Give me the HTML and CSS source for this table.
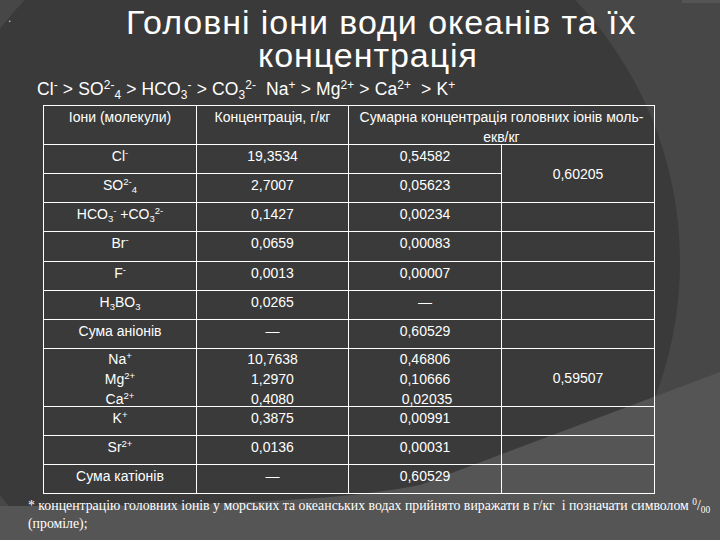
FILE: index.html
```html
<!DOCTYPE html>
<html lang="uk">
<head>
<meta charset="utf-8">
<title>Головні іони води океанів</title>
<link rel="stylesheet" href="styles.css">
</head>
<body>
<div class="slide">
  <svg class="bg" width="720" height="540" viewBox="0 0 720 540" aria-hidden="true">
    <rect x="0" y="0" width="720" height="540" fill="#474747"/>
    <circle cx="300" cy="262" r="380" fill="#3a3a3a"/>
    <path d="M0,506 C180,506 330,503 420,485 L720,372 L720,540 L0,540 Z" fill="#555555"/>
    <rect x="682" y="0" width="38" height="3" fill="#555555"/>
  </svg>
  <span class="dot">.</span>
  <header class="title">
    <div class="t1">Головні іони води океанів та їх</div>
    <div class="t2">концентрація</div>
  </header>
  <p class="ions">Cl<sup>-</sup> &gt; SO<sup>2-</sup><sub>4</sub> &gt; HCO<sub>3</sub><sup>-</sup> &gt; CO<sub>3</sub><sup>2-</sup>&nbsp; Na<sup>+</sup> &gt; Mg<sup>2+</sup> &gt; Ca<sup>2+</sup>&nbsp; &gt; K<sup>+</sup></p>
  <div class="grid">
    <div class="c">Іони (молекули)</div>
    <div class="c">Концентрація, г/кг</div>
    <div class="c span2">Сумарна концентрація головних іонів моль-<br>екв/кг</div>

    <div class="c">Cl<sup>-</sup></div>
    <div class="c">19,3534</div>
    <div class="c">0,54582</div>
    <div class="c rows2 mid">0,60205</div>

    <div class="c">SO<sup>2-</sup><sub>4</sub></div>
    <div class="c">2,7007</div>
    <div class="c">0,05623</div>

    <div class="c">HCO<sub>3</sub><sup>-</sup> +CO<sub>3</sub><sup>2-</sup></div>
    <div class="c">0,1427</div>
    <div class="c">0,00234</div>
    <div class="c"></div>

    <div class="c">Br<sup>-</sup></div>
    <div class="c">0,0659</div>
    <div class="c">0,00083</div>
    <div class="c"></div>

    <div class="c">F<sup>-</sup></div>
    <div class="c">0,0013</div>
    <div class="c">0,00007</div>
    <div class="c"></div>

    <div class="c">H<sub>3</sub>BO<sub>3</sub></div>
    <div class="c">0,0265</div>
    <div class="c">—</div>
    <div class="c"></div>

    <div class="c">Сума аніонів</div>
    <div class="c">—</div>
    <div class="c">0,60529</div>
    <div class="c"></div>

    <div class="c block">Na<sup>+</sup><br>Mg<sup>2+</sup><br>Ca<sup>2+</sup></div>
    <div class="c block">10,7638<br>1,2970<br>0,4080</div>
    <div class="c block">0,46806<br>0,10666<br>&nbsp;0,02035</div>
    <div class="c mid">0,59507</div>

    <div class="c">K<sup>+</sup></div>
    <div class="c">0,3875</div>
    <div class="c">0,00991</div>
    <div class="c"></div>

    <div class="c">Sr<sup>2+</sup></div>
    <div class="c">0,0136</div>
    <div class="c">0,00031</div>
    <div class="c"></div>

    <div class="c">Сума катіонів</div>
    <div class="c">—</div>
    <div class="c">0,60529</div>
    <div class="c"></div>
  </div>
  <p class="note">* концентрацію головних іонів у морських та океанських водах прийнято виражати в г/кг &nbsp;і позначати символом <sup>0</sup>/<sub>00</sub><br>(проміле);</p>
</div>
</body>
</html>
```

FILE: styles.css
```css
html, body {
  margin: 0;
  padding: 0;
}

body {
  background: #3a3a3a;
  color: #ffffff;
  font-family: "Liberation Sans", Arial, sans-serif;
}

.slide {
  position: relative;
  width: 720px;
  height: 540px;
  overflow: hidden;
}

.bg {
  position: absolute;
  left: 0;
  top: 0;
  z-index: 0;
}

.slide > *:not(.bg) {
  position: relative;
  z-index: 1;
}

.dot {
  position: absolute !important;
  left: 8px;
  top: 12px;
  font-size: 12px;
  line-height: 12px;
  color: #cfcfcf;
}

sup, sub {
  font-size: 0.68em;
  line-height: 0;
  vertical-align: baseline;
  position: relative;
}

sup {
  top: -0.5em;
}

sub {
  top: 0.3em;
}

.title {
  display: flex;
  flex-direction: column;
  align-items: flex-start;
  padding-top: 6px;
  height: 65px;
  font-size: 34px;
  line-height: 33px;
  letter-spacing: 0.95px;
}

.t1 {
  margin-left: 126px;
}

.t2 {
  margin-left: 258px;
}

.ions {
  margin: 0 0 0 37px;
  padding-top: 8px;
  font-size: 17.5px;
  line-height: 20px;
  height: 26px;
  letter-spacing: 0.12px;
}

.grid {
  display: grid;
  grid-template-columns: 153px 152px 153px 153px;
  grid-template-rows: 39px 29px 29px 29px 30px 29px 29px 29px 58px 29px 29px 29px;
  width: fit-content;
  margin-left: 43px;
  border-top: 1px solid #ffffff;
  border-left: 1px solid #ffffff;
  font-size: 14px;
}

.c {
  box-sizing: border-box;
  border-right: 1px solid #ffffff;
  border-bottom: 1px solid #ffffff;
  text-align: center;
  padding-top: 1px;
  line-height: 20px;
  white-space: nowrap;
}

.span2 {
  grid-column: span 2;
}

.rows2 {
  grid-row: span 2;
}

.mid {
  display: flex;
  align-items: center;
  justify-content: center;
  padding-top: 0;
}

.block {
  padding-top: 0;
}

.note {
  margin: 0 0 0 28px;
  padding-top: 3px;
  font-family: "Liberation Serif", "Times New Roman", serif;
  font-size: 13.8px;
  line-height: 18px;
  white-space: nowrap;
}
```
